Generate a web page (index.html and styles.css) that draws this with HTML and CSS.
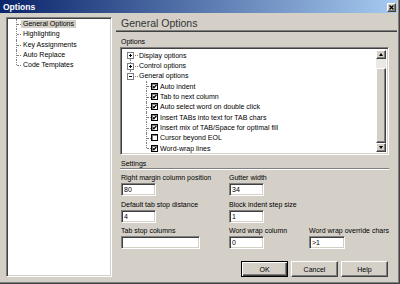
FILE: index.html
```html
<!DOCTYPE html>
<html>
  <head>
    <title>Options</title>
    <link rel="stylesheet" href="styles.css">
  </head>
  <body>
    <div class="window">
      <div class="titlebar">
        <span class="title">Options</span>
        <button class="close-btn" type="button">
          <svg width="5" height="5" viewBox="0 0 5 5"><path d="M0.5 0.5 L4.5 4.5 M4.5 0.5 L0.5 4.5" stroke="#000" stroke-width="1.3"/></svg>
        </button>
      </div>
      <div class="dialog">
        <div class="nav sunken"> <!-- page list -->
          <ul class="nav-tree">
            <li><span class="selected">General Options</span></li>
            <li><span>Highlighting</span></li>
            <li><span>Key Assignments</span></li>
            <li><span>Auto Replace</span></li>
            <li><span>Code Templates</span></li>
          </ul>
        </div>
        <div class="main">
          <div class="page-title">General Options</div>
          <div class="content">
            <div class="group-label">Options</div>
            <div class="options-box sunken">
              <div class="opt-tree">
                <div class="node first"><span class="expander plus"></span>Display options</div>
                <div class="node"><span class="expander plus"></span>Control options</div>
                <div class="node last"><span class="expander"></span>General options</div>
                <div class="node child"><span class="check on"></span>Auto indent</div>
                <div class="node child"><span class="check on"></span>Tab to next column</div>
                <div class="node child"><span class="check on"></span>Auto select word on double click</div>
                <div class="node child"><span class="check on"></span>Insert TABs into text for TAB chars</div>
                <div class="node child"><span class="check on"></span>Insert mix of TAB/Space for optimal fill</div>
                <div class="node child"><span class="check"></span>Cursor beyond EOL</div>
                <div class="node child last"><span class="check on"></span>Word-wrap lines</div>
              </div>
              <div class="scrollbar">
                <div class="sb-btn"><span class="arrow-up"></span></div>
                <div class="sb-track"></div>
                <div class="sb-thumb"></div>
                <div class="sb-btn"><span class="arrow-down"></span></div>
              </div>
            </div>
            <div class="group-label settings-label">Settings</div>
            <div class="settings">
              <div class="field">
                <label for="rightMargin">Right margin column position</label>
                <input type="text" id="rightMargin" value="80">
              </div>
              <div class="field">
                <label for="gutter">Gutter width</label>
                <input type="text" id="gutter" value="34">
              </div>
              <div class="field new-row">
                <label for="tabStop">Default tab stop distance</label>
                <input type="text" id="tabStop" value="4">
              </div>
              <div class="field">
                <label for="blockIndent">Block indent step size</label>
                <input type="text" id="blockIndent" value="1">
              </div>
              <div class="field new-row">
                <label for="tabColumns">Tab stop columns</label>
                <input type="text" id="tabColumns" class="wide" value="">
              </div>
              <div class="field">
                <label for="wrapColumn">Word wrap column</label>
                <input type="text" id="wrapColumn" value="0">
              </div>
              <div class="field">
                <label for="wrapChars">Word wrap override chars</label>
                <input type="text" id="wrapChars" class="mid" value=">1">
              </div>
            </div>
            <div class="buttons">
              <button type="button" class="btn default">OK</button>
              <button type="button" class="btn">Cancel</button>
              <button type="button" class="btn">Help</button>
            </div>
          </div>
        </div>
      </div>
    </div>
  </body>
</html>
```
FILE: styles.css
```css
/* Classic dialog look */
body {
  margin: 0;
  font-family: "Liberation Sans", Arial, sans-serif;
  font-size: 7px;
  color: #000;
}

.window {
  width: 400px;
  height: 284px;
  box-sizing: border-box;
  display: flex;
  flex-direction: column;
  background-color: #d4d0c8; /* button face */
  border-right: 1px solid #404040;
  border-bottom: 1px solid #404040;
  box-shadow: inset -1px -1px #808080;
  padding: 0 2px 2px 0;
}

.titlebar {
  height: 13px;
  display: flex;
  align-items: center;
  justify-content: space-between;
  padding: 0 1px 0 3px;
  background: linear-gradient(to right, #0a246a, #a6caf0);
}

.title {
  color: #fff;
  font-weight: bold;
  font-size: 8.5px;
}

.close-btn {
  width: 9px;
  height: 9px;
  margin-top: 1px;
  padding: 0;
  display: flex;
  align-items: center;
  justify-content: center;
  background-color: #d4d0c8;
  border: 1px solid;
  border-color: #fff #404040 #404040 #fff;
  box-shadow: inset -1px -1px #808080;
}

.dialog {
  flex: 1;
  display: flex;
  padding-left: 6px;
  min-height: 0;
}

/* sunken white boxes */
.sunken {
  box-sizing: border-box;
  background-color: #fff;
  border: 1px solid;
  border-color: #808080 #fff #fff #808080;
  box-shadow: inset 1px 1px #404040, inset -1px -1px #d4d0c8;
}

.nav {
  width: 110px;
  margin: 4px 0;
}

.nav-tree {
  list-style: none;
  margin: 0;
  padding: 1px 0 0 9px;
}

.nav-tree li {
  position: relative;
  height: 10.25px;
  display: flex;
  align-items: center;
  padding-left: 5px;
}

.nav-tree li::before,
.node::before { /* vertical tree line */
  content: "";
  position: absolute;
  left: 0;
  top: 0;
  bottom: 0;
  border-left: 1px dotted #808080;
}

.nav-tree li:last-child::before,
.node.last::before {
  bottom: 50%;
}

.nav-tree li::after,
.node::after { /* horizontal tree line */
  content: "";
  position: absolute;
  left: 1px;
  top: 50%;
  width: 4px;
  border-top: 1px dotted #808080;
}

.nav-tree span {
  line-height: 8px;
  padding: 0 2px;
  white-space: nowrap;
}

.nav-tree .selected {
  background-color: #d4d0c8;
}

.main {
  flex: 1;
  display: flex;
  flex-direction: column;
  margin-left: 4px;
}

.page-title {
  height: 14px;
  padding: 3px 0 0 5px;
  font-size: 10.5px;
  line-height: 14px;
  color: #333;
  border-bottom: 1px solid #808080;
  box-shadow: 0 1px #404040;
}

.content {
  flex: 1;
  display: flex;
  flex-direction: column;
  padding: 0 8px 0 4px;
}

.group-label {
  line-height: 8px;
  margin-top: 7px;
  margin-bottom: 1px;
  padding-left: 1px;
}

.options-box {
  height: 108px;
  display: flex;
  padding: 2px;
}

.opt-tree {
  flex: 1;
  padding-left: 7px;
}

.node {
  position: relative;
  height: 10.35px;
  display: flex;
  align-items: center;
  padding-left: 9px;
  white-space: nowrap;
}

.node::after {
  width: 7px;
}

.node.first::before {
  top: 50%;
}

.expander {
  position: absolute;
  left: -3px;
  top: 50%;
  margin-top: -3px;
  width: 7px;
  height: 7px;
  box-sizing: border-box;
  border: 1px solid #808080;
  background-color: #fff;
  z-index: 1;
}

.expander::before {
  content: "";
  position: absolute;
  left: 1px;
  top: 2px;
  width: 3px;
  height: 1px;
  background-color: #000;
}

.expander.plus::after {
  content: "";
  position: absolute;
  left: 2px;
  top: 1px;
  width: 1px;
  height: 3px;
  background-color: #000;
}

.node.child {
  margin-left: 16px;
  padding-left: 5px;
}

.node.child::after {
  width: 4px;
}

.check { /* tree check boxes */
  width: 7px;
  height: 7px;
  box-sizing: border-box;
  margin-right: 2px;
  border: 1px solid #000;
  box-shadow: inset 1px 1px #808080;
  background-color: #fff;
}

.check.on {
  background: #fff url("data:image/svg+xml;utf8,<svg xmlns='http://www.w3.org/2000/svg' width='5' height='5' viewBox='0 0 5 5'><path d='M0.6 2.3 L1.9 3.7 L4.4 0.9' fill='none' stroke='black' stroke-width='1.4'/></svg>") no-repeat center;
}

.scrollbar {
  width: 10px;
  display: flex;
  flex-direction: column;
}

.sb-btn,
.sb-thumb,
.btn {
  box-sizing: border-box;
  background-color: #d4d0c8;
  border: 1px solid;
  border-color: #fff #404040 #404040 #fff;
  box-shadow: inset -1px -1px #808080;
}

.sb-btn {
  height: 9px;
  display: flex;
  align-items: center;
  justify-content: center;
}

.arrow-up,
.arrow-down {
  width: 0;
  height: 0;
  border-left: 2.5px solid transparent;
  border-right: 2.5px solid transparent;
}

.arrow-up {
  border-bottom: 3px solid #000;
}

.arrow-down {
  border-top: 3px solid #000;
}

.sb-track {
  height: 9px;
  background-color: #ebe9e4;
}

.sb-thumb {
  flex: 1;
}

.settings-label {
  margin-top: 5px;
  margin-bottom: 0;
  border-bottom: 1px solid #808080;
  box-shadow: 0 1px #fff;
}

.settings {
  display: grid;
  grid-template-columns: 108px 80px 1fr;
  row-gap: 4.5px;
  margin-top: 5px;
  padding-left: 1px;
}

.field.new-row {
  grid-column: 1;
}

.field label {
  display: block;
  line-height: 8px;
  margin-bottom: 1px;
  white-space: nowrap;
}

.field input { /* sunken edit boxes */
  display: block;
  width: 35px;
  height: 13px;
  box-sizing: border-box;
  padding: 0 2px;
  font-family: "Liberation Sans", Arial, sans-serif;
  font-size: 7px;
  color: #000;
  background-color: #fff;
  border: 1px solid;
  border-color: #808080 #fff #fff #808080;
  box-shadow: inset 1px 1px #404040, inset -1px -1px #d4d0c8;
  outline: none;
}

.field input.wide {
  width: 79px;
}

.field input.mid {
  width: 36px;
}

.buttons {
  display: flex;
  justify-content: flex-end;
  gap: 3px;
  margin-top: 12px;
  padding-right: 1px;
}

.btn {
  width: 47px;
  height: 16px;
  padding: 0;
  font-family: "Liberation Sans", Arial, sans-serif;
  font-size: 7px;
  color: #000;
}

.btn.default {
  border: 1px solid #000;
  box-shadow: inset 1px 1px #fff, inset -1px -1px #404040, inset -2px -2px #808080;
}
```
